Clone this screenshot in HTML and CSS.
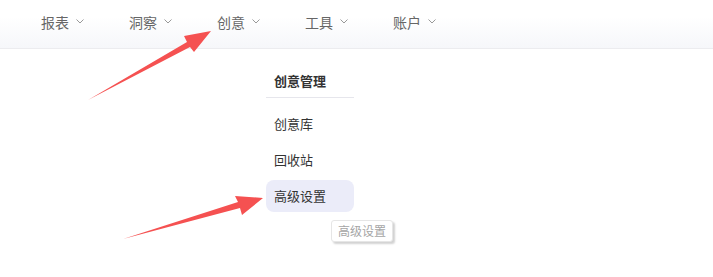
FILE: index.html
```html
<!DOCTYPE html>
<html lang="zh-CN">
<head>
<meta charset="utf-8">
<link rel="stylesheet" href="styles.css">
</head>
<body>
<header class="topbar">
  <nav class="nav">
    <div class="nav-item"><span>报表</span><svg class="chev" viewBox="0 0 8 5"><path d="M0.5 0.5 L4 4 L7.5 0.5"/></svg></div>
    <div class="nav-item"><span>洞察</span><svg class="chev" viewBox="0 0 8 5"><path d="M0.5 0.5 L4 4 L7.5 0.5"/></svg></div>
    <div class="nav-item"><span>创意</span><svg class="chev" viewBox="0 0 8 5"><path d="M0.5 0.5 L4 4 L7.5 0.5"/></svg></div>
    <div class="nav-item"><span>工具</span><svg class="chev" viewBox="0 0 8 5"><path d="M0.5 0.5 L4 4 L7.5 0.5"/></svg></div>
    <div class="nav-item"><span>账户</span><svg class="chev" viewBox="0 0 8 5"><path d="M0.5 0.5 L4 4 L7.5 0.5"/></svg></div>
  </nav>
</header>
<div class="menu">
  <div class="menu-title">创意管理</div>
  <ul class="menu-list">
    <li class="menu-item">创意库</li>
    <li class="menu-item">回收站</li>
    <li class="menu-item active">高级设置<span class="tooltip">高级设置</span></li>
  </ul>
</div>
<svg class="arrows" width="713" height="277" viewBox="0 0 713 277">
  <polygon class="arrow" points="88,100 187,42 184,36 211,31 194,52 190,47"/>
  <polygon class="arrow" points="123,239 238,202 235,196 263,198 242,215 240,208"/>
</svg>
</body>
</html>
```
FILE: styles.css
```css
* { box-sizing: border-box; }
html, body { margin: 0; padding: 0; background: #fff; }
body {
  width: 713px;
  height: 277px;
  overflow: hidden;
  position: relative;
  font-family: "Noto Sans CJK SC", "Noto Sans", sans-serif;
}
.topbar {
  height: 49px;
  background: linear-gradient(to bottom, #ffffff 0%, #ffffff 35%, #f6f7fa 100%);
  border-bottom: 1px solid #ececef;
}
.nav {
  display: flex;
  align-items: center;
  height: 44px;
  padding-left: 41px;
  gap: 45px;
}
.nav-item {
  display: flex;
  flex: none;
  align-items: center;
  gap: 7px;
  font-size: 14px;
  color: #666;
  line-height: 20px;
  white-space: nowrap;
}
.chev {
  flex: none;
  width: 8px;
  height: 5px;
  margin-top: -2px;
  fill: none;
  stroke: #999;
  stroke-width: 1;
}
.menu {
  margin-left: 266px;
  width: 88px;
  padding-top: 22px;
  position: relative;
}
.menu-title {
  font-size: 13px;
  font-weight: 700;
  color: #333;
  line-height: 20px;
  padding: 0 8px 6px;
  border-bottom: 1px solid #e6e6ec;
}
.menu-list {
  list-style: none;
  margin: 0;
  padding: 10px 0 0;
  display: flex;
  flex-direction: column;
  gap: 4px;
}
.menu-item {
  position: relative;
  height: 32px;
  line-height: 32px;
  padding-left: 8px;
  font-size: 13px;
  color: #333;
  border-radius: 8px;
}
.menu-item.active { background: #ebecf9; }
.tooltip {
  position: absolute;
  left: 65px;
  top: 40px;
  width: 62px;
  height: 22px;
  line-height: 20px;
  padding-left: 6px;
  font-size: 12px;
  color: #a5a5a5;
  background: #fff;
  border: 1px solid #e6e6e6;
  border-radius: 3px;
  box-shadow: 2px 2px 2px rgba(0,0,0,0.18);
  white-space: nowrap;
}
.arrows {
  position: absolute;
  left: 0;
  top: 0;
  pointer-events: none;
}
.arrow { fill: #f55151; }
```
